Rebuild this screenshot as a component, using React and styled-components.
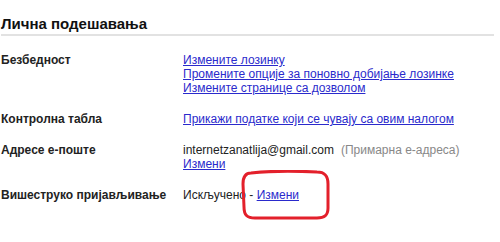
import React from 'react'
import styled, { createGlobalStyle } from 'styled-components'

const Global = createGlobalStyle`
    html, body {
        margin: 0;
        padding: 0;
        background: #fff;
    }
    body {
        font-family: Arial, 'Liberation Sans', sans-serif;
        color: #222;
        width: 500px;
        height: 242px;
        overflow: hidden;
    }
`

const Page = styled.div`
    position: relative;
    width: 500px;
    height: 242px;
    padding: 15px 6px 0 1px;
    box-sizing: border-box;
`

const Title = styled.h2`
    margin: 0;
    font-size: 15px;
    font-weight: bold;
    color: #111;
    line-height: 17px;
    padding-bottom: 2px;
    border-bottom: 2px solid #e2e2e2;
`

const Settings = styled.div`
    display: grid;
    grid-template-columns: 182px 1fr;
    row-gap: 17px;
    padding-top: 17px;
    font-size: 12px;
    line-height: 14px;
`

const Label = styled.div`
    font-weight: bold;
    color: #222;
`

const Value = styled.div`
    display: flex;
    flex-direction: column;
    align-items: flex-start;
`

const Link = styled.a`
    color: #2a2acc;
    text-decoration: underline;
    cursor: pointer;
`

const Note = styled.span`
    color: #888;
    margin-left: 7px;
`

const Mark = styled.svg`
    position: absolute;
    left: 239px;
    top: 170px;
    width: 92px;
    height: 51px;
`

export default function App() {
    return (
        <>
            <Global />
            <Page>
                <Title>Лична подешавања</Title>
                <Settings>
                    <Label>Безбедност</Label>
                    <Value>
                        <Link>Измените лозинку</Link>
                        <Link>Промените опције за поновно добијање лозинке</Link>
                        <Link>Измените странице са дозволом</Link>
                    </Value>

                    <Label>Контролна табла</Label>
                    <Value>
                        <Link>Прикажи податке који се чувају са овим налогом</Link>
                    </Value>

                    <Label>Адресе е-поште</Label>
                    <Value>
                        <span>internetzanatlija@gmail.com<Note>(Примарна е-адреса)</Note></span>
                        <Link>Измени</Link>
                    </Value>

                    <Label>Вишеструко пријављивање</Label>
                    <Value>
                        <span>Искључено - <Link>Измени</Link></span>
                    </Value>
                </Settings>
                <Mark viewBox="0 0 92 51">
                    <path
                        d="M12 3 C30 1 60 1 78 2 C86 2 89 6 89 14 L89 38 C89 45 86 48 78 48 L16 48 C8 48 5 45 5 37 L4 14 C4 6 7 3 12 3 Z"
                        fill="none"
                        stroke="#e3202b"
                        strokeWidth="3"
                    />
                </Mark>
            </Page>
        </>
    )
}
